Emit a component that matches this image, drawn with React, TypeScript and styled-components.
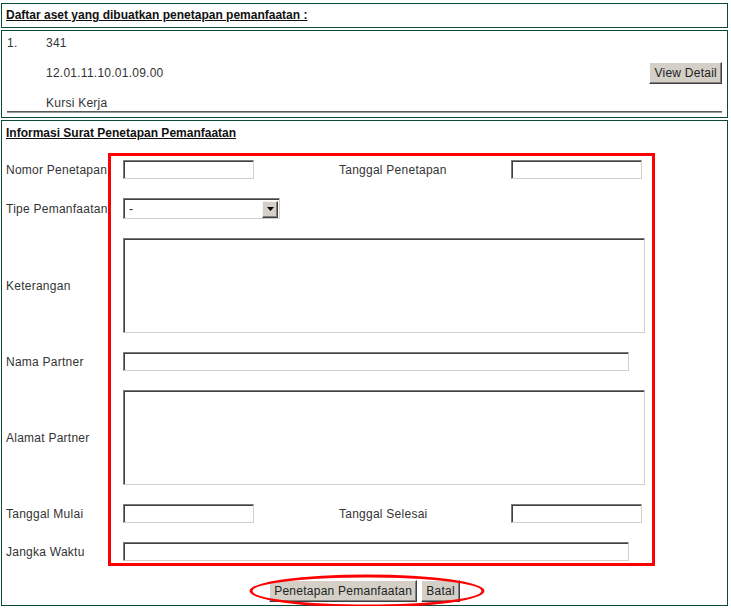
import React from "react";
import styled, { createGlobalStyle } from "styled-components";

const GlobalStyle = createGlobalStyle`
  html, body { margin: 0; padding: 0; background: #fff; }
  body {
    font-family: "Liberation Sans", Arial, sans-serif;
    font-size: 12px;
    letter-spacing: 0.25px;
    color: #333;
  }
  * { box-sizing: border-box; }
`;

const Page = styled.div`
  display: flex;
  flex-direction: column;
  gap: 2px;
  padding: 3px 0 0 1px;
  width: 731px;
`;

const Panel = styled.section`
  width: 727px;
  border: 1px solid #0b4a33;
  background: #fff;
`;

const HeaderPanel = styled(Panel)`
  padding: 4px 4px;
  height: 25px;
`;

const SectionTitle = styled.h2`
  margin: 0;
  font-size: 12px;
  line-height: 15px;
  font-weight: bold;
  letter-spacing: 0;
  color: #111;
  text-decoration: underline;
`;

const AssetPanel = styled(Panel)`
  padding: 4px 5px 4px 5px;
`;

const AssetGrid = styled.div`
  display: grid;
  grid-template-columns: 39px 1fr auto;
  grid-auto-rows: 16px;
  row-gap: 14px;
  align-items: center;
  line-height: 16px;
`;

const Rule = styled.div`
  height: 2px;
  border-top: 1px solid #5a5a5a;
  border-bottom: 1px solid #9a9a9a;
`;

const Button = styled.button`
  font-family: "Liberation Sans", Arial, sans-serif;
  font-size: 12px;
  letter-spacing: 0.25px;
  color: #222;
  height: 22px;
  padding: 0 4px;
  background: #d4d0c8;
  border: 1px solid;
  border-color: #ffffff #404040 #404040 #ffffff;
  box-shadow: inset -1px -1px #808080;
  border-radius: 0;
  cursor: pointer;
  white-space: nowrap;
  align-self: center;
`;

const FormPanel = styled(Panel)`
  padding: 5px 4px 3px 4px;
`;

const FormGrid = styled.div`
  display: grid;
  grid-template-columns: 102px 547px;
  row-gap: 19px;
  margin-top: 19px;
`;

const RedFrame = styled.div`
  grid-column: 2 / 3;
  grid-row: 1 / 8;
  margin: -7px 0 -5px 0;
  border: 3px solid #ff0000;
  pointer-events: none;
`;

const Label = styled.label<{ $row: number }>`
  grid-column: 1 / 2;
  grid-row: ${(p) => p.$row};
  align-self: center;
  white-space: nowrap;
  line-height: 14px;
  color: #333;
`;

const Field = styled.div<{ $row: number }>`
  grid-column: 2 / 3;
  grid-row: ${(p) => p.$row};
  padding-left: 15px;
  display: flex;
  align-items: center;
`;

const PairField = styled(Field)`
  display: grid;
  grid-template-columns: 216px 172px 131px;
  align-items: center;
`;

const InlineLabel = styled.label`
  white-space: nowrap;
  color: #333;
`;

const insetBorder = `
  border-style: solid;
  border-width: 1px;
  border-color: #7a7a7a #d4d0c8 #d4d0c8 #7a7a7a;
  box-shadow: inset 1px 1px #404040;
  background: #fff;
  border-radius: 0;
  outline: none;
  font-family: "Liberation Sans", Arial, sans-serif;
  font-size: 12px;
  color: #222;
`;

const TextInput = styled.input<{ $w: number }>`
  ${insetBorder}
  width: ${(p) => p.$w}px;
  height: 19px;
  padding: 0 3px;
`;

const TextArea = styled.textarea`
  ${insetBorder}
  width: 522px;
  height: 95px;
  padding: 2px 3px;
  resize: none;
  display: block;
`;

const SelectBox = styled.div`
  ${insetBorder}
  width: 157px;
  height: 21px;
  display: flex;
  align-items: center;
  padding: 2px 1px 1px 2px;
`;

const SelectValue = styled.span`
  flex: 1;
  padding-left: 3px;
  color: #222;
  line-height: 14px;
`;

const SelectArrow = styled.span`
  width: 16px;
  height: 17px;
  background: #d4d0c8;
  border: 1px solid;
  border-color: #f4f4f4 #404040 #404040 #f4f4f4;
  box-shadow: inset -1px -1px #808080;
  display: flex;
  align-items: center;
  justify-content: center;
`;

const ButtonRow = styled.div`
  position: relative;
  display: flex;
  justify-content: center;
  gap: 4px;
  margin-top: 19px;
`;

const Ellipse = styled.div`
  position: absolute;
  left: 50%;
  top: 50%;
  width: 235px;
  height: 33px;
  margin-left: 2px;
  transform: translate(-50%, -50%);
  border: 3px solid #ff0000;
  border-radius: 50%;
  pointer-events: none;
`;

export default function App() {
  return (
    <>
      <GlobalStyle />
      <Page>
        <HeaderPanel>
          <SectionTitle>Daftar aset yang dibuatkan penetapan pemanfaatan :</SectionTitle>
        </HeaderPanel>

        <AssetPanel>
          <AssetGrid>
            <span>1.</span>
            <span>341</span>
            <span />
            <span />
            <span>12.01.11.10.01.09.00</span>
            <Button type="button">View Detail</Button>
            <span />
            <span>Kursi Kerja</span>
            <span />
          </AssetGrid>
          <Rule />
        </AssetPanel>

        <FormPanel>
          <SectionTitle>Informasi Surat Penetapan Pemanfaatan</SectionTitle>
          <FormGrid>
            <RedFrame />

            <Label $row={1}>Nomor Penetapan</Label>
            <PairField $row={1}>
              <TextInput $w={131} />
              <InlineLabel>Tanggal Penetapan</InlineLabel>
              <TextInput $w={131} />
            </PairField>

            <Label $row={2}>Tipe Pemanfaatan</Label>
            <Field $row={2}>
              <SelectBox>
                <SelectValue>-</SelectValue>
                <SelectArrow>
                  <svg width="7" height="4" viewBox="0 0 7 4">
                    <path d="M0 0H7L3.5 4Z" fill="#000" />
                  </svg>
                </SelectArrow>
              </SelectBox>
            </Field>

            <Label $row={3}>Keterangan</Label>
            <Field $row={3}>
              <TextArea />
            </Field>

            <Label $row={4}>Nama Partner</Label>
            <Field $row={4}>
              <TextInput $w={506} />
            </Field>

            <Label $row={5}>Alamat Partner</Label>
            <Field $row={5}>
              <TextArea />
            </Field>

            <Label $row={6}>Tanggal Mulai</Label>
            <PairField $row={6}>
              <TextInput $w={131} />
              <InlineLabel>Tanggal Selesai</InlineLabel>
              <TextInput $w={131} />
            </PairField>

            <Label $row={7}>Jangka Waktu</Label>
            <Field $row={7}>
              <TextInput $w={506} />
            </Field>
          </FormGrid>

          <ButtonRow>
            <Button type="button">Penetapan Pemanfaatan</Button>
            <Button type="button">Batal</Button>
            <Ellipse />
          </ButtonRow>
        </FormPanel>
      </Page>
    </>
  );
}
